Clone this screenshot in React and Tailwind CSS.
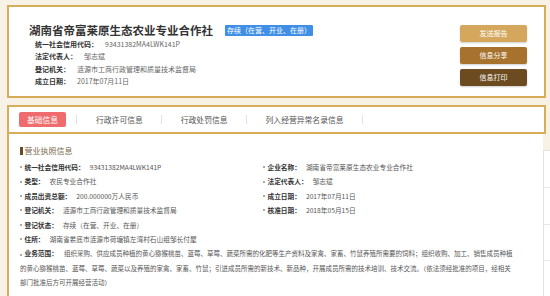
import React from 'react';

const topRows = [
  { label: '统一社会信用代码：', value: '93431382MA4LWK141P' },
  { label: '法定代表人：', value: '邹志斌' },
  { label: '登记机关：', value: '涟源市工商行政管理和质量技术监督局' },
  { label: '成立日期：', value: '2017年07月11日' },
];

const leftRows = [
  { label: '统一社会信用代码：', value: '93431382MA4LWK141P' },
  { label: '类型：', value: '农民专业合作社' },
  { label: '成员出资总额：', value: '200.000000万人民币' },
  { label: '登记机关：', value: '涟源市工商行政管理和质量技术监督局' },
];

const rightRows = [
  { label: '企业名称：', value: '湖南省帝富莱原生态农业专业合作社' },
  { label: '法定代表人：', value: '邹志斌' },
  { label: '成立日期：', value: '2017年07月11日' },
  { label: '核准日期：', value: '2018年05月15日' },
];

const tabs = ['行政许可信息', '行政处罚信息', '列入经营异常名录信息'];

const buttons = [
  { text: '发送报告', color: 'bg-[#d5a75c]' },
  { text: '信息分享', color: 'bg-[#a6722d]' },
  { text: '信息打印', color: 'bg-[#6b4b1f]' },
];

const InfoRow = ({ label, value }) => (
  <div className="flex items-center text-[6.7px] leading-[14.4px] whitespace-nowrap">
    <span className="w-[2px] h-[2px] bg-[#aaa] mr-[2.5px]" />
    <span className="font-bold text-[#333]">{label}</span>
    <span className="ml-[5px] text-[#555]">{value}</span>
  </div>
);

export default function App() {
  return (
    <div className="w-[550px] h-[296px] overflow-hidden bg-[#f8f2e6] pt-[5px] font-['Noto_Sans_CJK_SC','Noto_Sans',sans-serif] text-[#333]">
      {/* Header card */}
      <div className="ml-[7px] w-[539px] h-[93px] border-2 border-[#d6ad58] bg-white flex justify-between">
        <div className="pl-[20px] pt-[16px]">
          <div className="flex items-center h-[14px]">
            <h1 className="text-[11.5px] font-bold leading-[14px] text-[#333] whitespace-nowrap">湖南省帝富莱原生态农业专业合作社</h1>
            <span className="ml-[12px] h-[11px] px-[2px] bg-[#3f8fe6] text-white text-[7px] leading-[11px] rounded-[1px] whitespace-nowrap">
              存续（在营、开业、在册）
            </span>
          </div>
          <div className="ml-[6px] mt-[1px]">
            {topRows.map((r) => (
              <div key={r.label} className="flex text-[7px] leading-[12.3px] whitespace-nowrap">
                <span className="font-bold text-[#333]">{r.label}</span>
                <span className="ml-[7px] text-[#666]">{r.value}</span>
              </div>
            ))}
          </div>
        </div>
        <div className="pt-[18px] pr-[17px] flex flex-col gap-[5px]">
          {buttons.map((b) => (
            <div
              key={b.text}
              className={`w-[67px] h-[17px] ${b.color} rounded-[2px] shadow-[0_1px_2px_rgba(0,0,0,0.2)] text-white text-[7px] flex items-center justify-center`}
            >
              {b.text}
            </div>
          ))}
        </div>
      </div>

      {/* Tab bar */}
      <div className="mt-[7px] ml-[7px] w-[539px] h-[29px] border-2 border-[#d6ad58] bg-white flex items-center pl-[10px] text-[7.8px] text-[#555]">
        <div className="w-[47px] h-[15px] bg-[#ef6b6e] text-white rounded-[2px] flex items-center justify-center">基础信息</div>
        <span className="ml-[10px] w-px h-[9px] bg-[#e2e2e2]" />
        {tabs.map((t) => (
          <React.Fragment key={t}>
            <span className="ml-[19px] whitespace-nowrap">{t}</span>
            <span className="ml-[18px] w-px h-[9px] bg-[#e2e2e2]" />
          </React.Fragment>
        ))}
      </div>

      {/* Content */}
      <div className="ml-[7px] flex h-[170px]">
        <div className="w-[536px] shrink-0 border-l-2 border-[#d6ad58] bg-white pl-[11px] pt-[12px]">
          <div className="flex items-center">
            <span className="w-[2.5px] h-[8px] bg-[#6b4a22]" />
            <span className="ml-[2px] text-[8px] leading-[10px] text-[#7a6a4e]">营业执照信息</span>
          </div>
          <div className="mt-[4px] grid grid-cols-[243px_1fr]">
            <div>
              {leftRows.map((r) => (
                <InfoRow key={r.label} {...r} />
              ))}
            </div>
            <div>
              {rightRows.map((r) => (
                <InfoRow key={r.label} {...r} />
              ))}
            </div>
          </div>
          <InfoRow label="登记状态：" value="存续（在营、开业、在册）" />
          <InfoRow label="住所：" value="湖南省娄底市涟源市荷塘镇左湾村石山组邹长付屋" />
          <p className="text-[6.5px] leading-[14.4px] text-[#555] whitespace-nowrap">
            <span className="inline-block w-[2px] h-[2px] bg-[#aaa] mr-[2.5px] align-middle" />
            <span className="font-bold text-[#333] text-[6.7px]">业务范围：</span>
            <span className="ml-[6px]">组织采购、供应成员种植的黄心猕猴桃苗、蓝莓、草莓、蔬菜所需的化肥等生产资料及家禽、家畜、竹鼠养殖所需要的饲料；组织收购、加工、销售成员种植</span>
            <br />
            的黄心猕猴桃苗、蓝莓、草莓、蔬菜以及养殖的家禽、家畜、竹鼠；引进成员所需的新技术、新品种，开展成员所需的技术培训、技术交流。（依法须经批准的项目，经相关
            <br />
            部门批准后方可开展经营活动）
          </p>
        </div>
        <div className="w-[60px] shrink-0 mt-[16px] h-[160px] border border-[#e3e3e3] bg-white">
          <div className="h-[37px] border-b border-[#e8e8e8]" />
          <div className="h-[37px] border-b border-[#e8e8e8]" />
          <div className="h-[36px] border-b border-[#e8e8e8]" />
        </div>
      </div>
    </div>
  );
}
